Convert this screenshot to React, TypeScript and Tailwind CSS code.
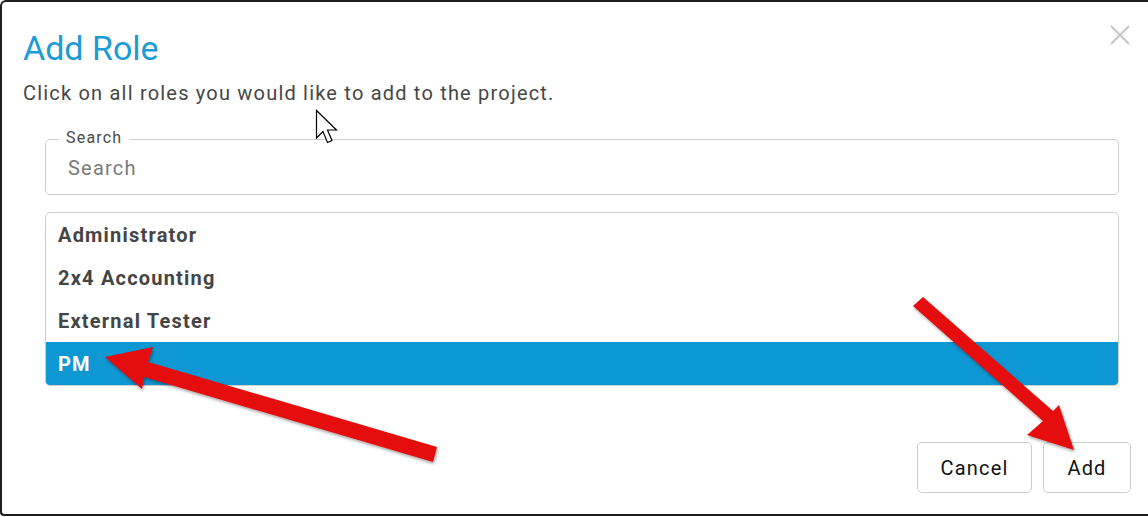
import React from 'react';

const roles = ['Administrator', '2x4 Accounting', 'External Tester', 'PM'];

function Cursor() {
  return (
    <svg
      className="absolute left-[315px] top-[109px]"
      width="28"
      height="40"
      viewBox="0 0 28 40"
    >
      <path
        d="M1.5 1.5 L1.5 29 L8 22.5 L12.5 33.5 L17 31.5 L12.5 21 L21.5 21 Z"
        fill="#ffffff"
        stroke="#000000"
        strokeWidth="1.2"
        strokeLinejoin="miter"
      />
    </svg>
  );
}

function Arrows() {
  return (
    <svg className="absolute left-0 top-0 pointer-events-none" width="1148" height="517">
      <defs>
        <filter id="sh" x="-10%" y="-10%" width="120%" height="120%">
          <feDropShadow dx="1" dy="2" stdDeviation="1.5" floodColor="#000" floodOpacity="0.35" />
        </filter>
      </defs>
      {/* arrow pointing at PM */}
      <polygon
        points="105,357 153,347 148,362 437,447 433,462 144,377 142,389"
        fill="#e50909"
        filter="url(#sh)"
      />
      {/* arrow pointing at Add */}
      <polygon
        points="923,297 1053,411 1059,405 1074,450 1027,435 1043,421 913,306"
        fill="#e50909"
        filter="url(#sh)"
      />
    </svg>
  );
}

export default function App() {
  return (
    <div
      className="relative w-[1148px] h-[517px] bg-white overflow-hidden"
      style={{ fontFamily: 'Roboto, "Liberation Sans", sans-serif' }}
    >
      <div className="h-[516px] border-2 border-r-0 border-[#1e1e1e] rounded-tl-md rounded-bl-sm bg-white flex flex-col tracking-[1.2px]">
        <div className="flex justify-between">
          <h1 className="pl-[21px] pt-[26px] text-[34px] leading-[40px] text-[#1b9bd7] font-normal tracking-normal">
            Add Role
          </h1>
          <button className="mr-[18px] mt-[23px] w-[20px] h-[20px] text-[#c6c6c6]">
            <svg width="20" height="20" viewBox="0 0 20 20">
              <path d="M1 1 L19 19 M19 1 L1 19" stroke="currentColor" strokeWidth="2" />
            </svg>
          </button>
        </div>
        <p className="pl-[21px] mt-[13px] text-[20px] leading-[24px] text-[#474747]">
          Click on all roles you would like to add to the project.
        </p>

        <div className="ml-[43px] mt-[34px] w-[1074px] h-[56px] relative border border-[#cfcfcf] rounded-[5px] flex items-center px-[22px]">
          <span className="absolute -top-[12px] left-[13px] bg-white px-[7px] text-[16px] leading-[20px] text-[#4a4a4a]">
            Search
          </span>
          <input
            placeholder="Search"
            className="w-full text-[20px] leading-[24px] tracking-[1.2px] outline-none placeholder:text-[#7a7a7a] mt-[2px]"
          />
        </div>

        <div className="ml-[43px] mt-[17px] w-[1074px] border border-[#cfcfcf] rounded-[5px] overflow-hidden">
          {roles.map((r, i) => (
            <div
              key={r}
              className={
                i === roles.length - 1
                  ? 'h-[43px] px-3 flex items-center text-[20px] font-bold bg-[#0d97d3] text-white'
                  : 'h-[43px] px-3 flex items-center text-[20px] font-bold text-[#454545]'
              }
            >
              {r}
            </div>
          ))}
        </div>

        <div className="flex justify-end gap-[11px] pr-[17px] mt-[56px]">
          <button className="w-[115px] h-[51px] border border-[#cdcdcd] rounded-[5px] text-[20px] text-[#111] tracking-[1.2px]">
            Cancel
          </button>
          <button className="w-[88px] h-[51px] border border-[#cdcdcd] rounded-[5px] text-[20px] text-[#111] tracking-[1.2px]">
            Add
          </button>
        </div>
      </div>
      <Cursor />
      <Arrows />
    </div>
  );
}
